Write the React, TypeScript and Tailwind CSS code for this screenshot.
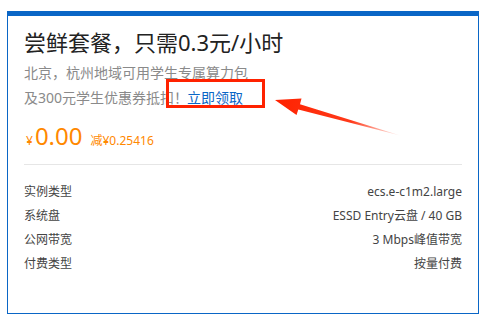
export default function App() {
  const specs = [
    ['实例类型', 'ecs.e-c1m2.large'],
    ['系统盘', 'ESSD Entry云盘 / 40 GB'],
    ['公网带宽', '3 Mbps峰值带宽'],
    ['付费类型', '按量付费'],
  ];

  return (
    <div
      className="relative w-[485px] h-[329px] bg-white pt-[11px] pl-[7px]"
      style={{ fontFamily: '"Noto Sans", "Noto Sans CJK SC", sans-serif' }}
    >
      <div className="w-[472px] h-[303px] border border-t-[5px] border-[#0a66c6] px-4 pt-[11px]">
        <h1 className="text-[22px] leading-[30px] text-[#222]">尝鲜套餐，只需0.3元/小时</h1>
        <div className="mt-[3px] text-[14px] leading-[25px] text-[#8a8a8a]">
          <p>北京，杭州地域可用学生专属算力包</p>
          <p>
            及300元学生优惠券抵扣<span className="tracking-[-6px]">！</span>
            <span className="relative ml-[5px] text-[#0a66c6]">
              立即领取
              <span className="absolute -left-[21px] -top-[9px] w-[99px] h-[29px] border-[3px] border-[#ff2200]" />
            </span>
          </p>
        </div>

        <div className="mt-[10px] flex items-baseline text-[#ff8800]">
          <span className="ml-[2px] text-[12px]">¥</span>
          <span className="text-[24px] leading-[32px] ml-[2px]">0.00</span>
          <span className="ml-[8px] text-[12px]">减¥0.25416</span>
        </div>

        <div className="mt-[12px] border-t border-[#e6e6e6]" />

        <div className="mt-[15px] flex flex-col text-[12px] leading-[24px] text-[#444]">
          {specs.map(([k, v]) => (
            <div key={k} className="flex justify-between">
              <span>{k}</span>
              <span>{v}</span>
            </div>
          ))}
        </div>
      </div>

      <svg className="absolute left-0 top-0 pointer-events-none" width="485" height="329">
        <defs>
          <linearGradient id="ag" x1="275" y1="100" x2="402" y2="136" gradientUnits="userSpaceOnUse">
            <stop offset="0" stopColor="#ff2200" />
            <stop offset="0.6" stopColor="#ff3a1a" />
            <stop offset="1" stopColor="#ff3a1a" stopOpacity="0" />
          </linearGradient>
        </defs>
        <polygon
          points="275,100 301.5,98.5 300,104.3 402,136 298.3,109.6 296.5,115"
          fill="url(#ag)"
        />
      </svg>
    </div>
  );
}
